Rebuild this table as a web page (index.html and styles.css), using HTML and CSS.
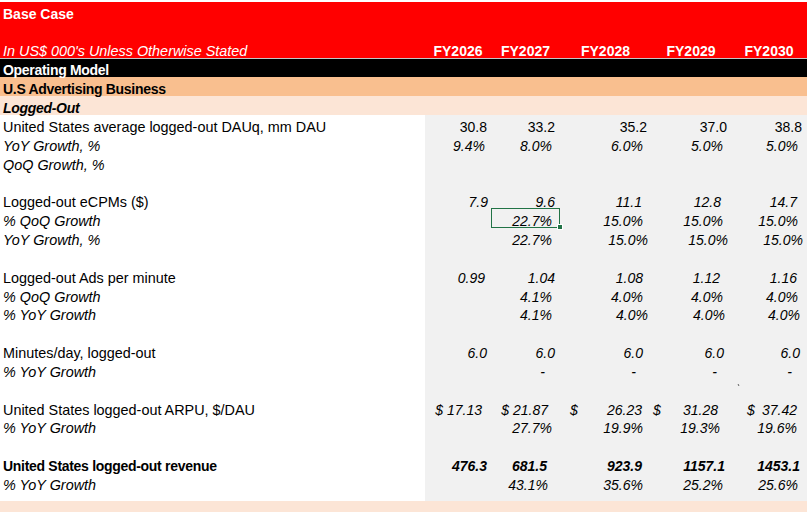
FILE: index.html
```html
<!DOCTYPE html>
<html lang="en">
<head>
<meta charset="utf-8">
<title>Base Case – Operating Model</title>
<link rel="stylesheet" href="styles.css">
</head>
<body>
<div class="sheet">
  <div class="row red first"><div class="cell lbl b span">Base Case</div></div>
  <div class="row red second"></div>
  <div class="row red hdr">
    <div class="cell lbl i">In US$ 000's Unless Otherwise Stated</div>
    <div class="cell hc">FY2026</div>
    <div class="cell hc">FY2027</div>
    <div class="cell hc">FY2028</div>
    <div class="cell hc">FY2029</div>
    <div class="cell hc">FY2030</div>
  </div>
  <div class="row black"><div class="cell lbl b span">Operating Model</div></div>
  <div class="row peach"><div class="cell lbl b span">U.S Advertising Business</div></div>
  <div class="row lpeach"><div class="cell lbl b i span">Logged-Out</div></div>

  <div class="row">
    <div class="cell lbl">United States average logged-out DAUq, mm DAU</div>
    <div class="cell num pr4">30.8</div><div class="cell num pr5">33.2</div><div class="cell num pr4">35.2</div><div class="cell num pr4">37.0</div><div class="cell num pr5">38.8</div>
  </div>
  <div class="row i">
    <div class="cell lbl">YoY Growth, %</div>
    <div class="cell num pr6">9.4%</div><div class="cell num pr8">8.0%</div><div class="cell num pr8">6.0%</div><div class="cell num pr8">5.0%</div><div class="cell num pr9">5.0%</div>
  </div>
  <div class="row i">
    <div class="cell lbl">QoQ Growth, %</div>
    <div class="cell num"></div><div class="cell num"></div><div class="cell num"></div><div class="cell num"></div><div class="cell num"></div>
  </div>
  <div class="row">
    <div class="cell lbl"></div>
    <div class="cell num"></div><div class="cell num"></div><div class="cell num"></div><div class="cell num"></div><div class="cell num"></div>
  </div>

  <div class="row">
    <div class="cell lbl">Logged-out eCPMs ($)</div>
    <div class="cell num i pr3">7.9</div><div class="cell num i pr5">9.6</div><div class="cell num i pr9">11.1</div><div class="cell num i pr10">12.8</div><div class="cell num i pr10">14.7</div>
  </div>
  <div class="row i">
    <div class="cell lbl">% QoQ Growth</div>
    <div class="cell num"></div><div class="cell num pr8 selected">22.7%<span class="sel"></span><span class="handle"></span></div><div class="cell num pr8">15.0%</div><div class="cell num pr8">15.0%</div><div class="cell num pr9">15.0%</div>
  </div>
  <div class="row i">
    <div class="cell lbl">YoY Growth, %</div>
    <div class="cell num"></div><div class="cell num pr8">22.7%</div><div class="cell num pr3">15.0%</div><div class="cell num pr3">15.0%</div><div class="cell num pr4">15.0%</div>
  </div>
  <div class="row">
    <div class="cell lbl"></div>
    <div class="cell num"></div><div class="cell num"></div><div class="cell num"></div><div class="cell num"></div><div class="cell num"></div>
  </div>

  <div class="row">
    <div class="cell lbl">Logged-out Ads per minute</div>
    <div class="cell num i pr6">0.99</div><div class="cell num i pr5">1.04</div><div class="cell num i pr8">1.08</div><div class="cell num i pr11">1.12</div><div class="cell num i pr10">1.16</div>
  </div>
  <div class="row i">
    <div class="cell lbl">% QoQ Growth</div>
    <div class="cell num"></div><div class="cell num pr8">4.1%</div><div class="cell num pr8">4.0%</div><div class="cell num pr8">4.0%</div><div class="cell num pr9">4.0%</div>
  </div>
  <div class="row i">
    <div class="cell lbl">% YoY Growth</div>
    <div class="cell num"></div><div class="cell num pr8">4.1%</div><div class="cell num pr3">4.0%</div><div class="cell num pr6">4.0%</div><div class="cell num pr7">4.0%</div>
  </div>
  <div class="row">
    <div class="cell lbl"></div>
    <div class="cell num"></div><div class="cell num"></div><div class="cell num"></div><div class="cell num"></div><div class="cell num"></div>
  </div>

  <div class="row">
    <div class="cell lbl">Minutes/day, logged-out</div>
    <div class="cell num i pr4">6.0</div><div class="cell num i pr5">6.0</div><div class="cell num i pr8">6.0</div><div class="cell num i pr7">6.0</div><div class="cell num i pr7">6.0</div>
  </div>
  <div class="row i">
    <div class="cell lbl">% YoY Growth</div>
    <div class="cell num"></div><div class="cell num pr15">-</div><div class="cell num pr15">-</div><div class="cell num pr14">-</div><div class="cell num pr15">-</div>
  </div>
  <div class="row">
    <div class="cell lbl"></div>
    <div class="cell num"></div><div class="cell num"></div><div class="cell num"></div><div class="cell num"></div><div class="cell num mark"><span class="tick"></span></div>
  </div>

  <div class="row i">
    <div class="cell lbl up">United States logged-out ARPU, $/DAU</div>
    <div class="cell num pr9">$ 17.13</div>
    <div class="cell num pr12">$ 21.87</div>
    <div class="cell num acct pl10 pr9"><span>$</span><span>26.23</span></div>
    <div class="cell num acct pl2 pr13"><span>$</span><span>31.28</span></div>
    <div class="cell num acct pl16 pr10"><span>$</span><span>37.42</span></div>
  </div>
  <div class="row i">
    <div class="cell lbl">% YoY Growth</div>
    <div class="cell num"></div><div class="cell num pr8">27.7%</div><div class="cell num pr8">19.9%</div><div class="cell num pr11">19.3%</div><div class="cell num pr10">19.6%</div>
  </div>
  <div class="row">
    <div class="cell lbl"></div>
    <div class="cell num"></div><div class="cell num"></div><div class="cell num"></div><div class="cell num"></div><div class="cell num"></div>
  </div>

  <div class="row">
    <div class="cell lbl b">United States logged-out revenue</div>
    <div class="cell num b i pr4">476.3</div><div class="cell num b i pr13">681.5</div><div class="cell num b i pr9">923.9</div><div class="cell num b i pr6">1157.1</div><div class="cell num b i pr7">1453.1</div>
  </div>
  <div class="row i">
    <div class="cell lbl">% YoY Growth</div>
    <div class="cell num"></div><div class="cell num pr12">43.1%</div><div class="cell num pr8">35.6%</div><div class="cell num pr8">25.2%</div><div class="cell num pr9">25.6%</div>
  </div>
  <div class="row short">
    <div class="cell lbl"></div>
    <div class="cell num"></div><div class="cell num"></div><div class="cell num"></div><div class="cell num"></div><div class="cell num"></div>
  </div>
  <div class="row lpeach tail"></div>
</div>
</body>
</html>
```

FILE: styles.css
```css
html, body {
  margin: 0;
  padding: 0;
  background: #ffffff;
  overflow: hidden;
}

.sheet {
  width: 807px;
  padding-top: 2px;
  font-family: "Liberation Sans", Arial, sans-serif;
  font-size: 14.4px;
  color: #000000;
}

.row {
  display: grid;
  grid-template-columns: 425px 66px 69px 91px 80px 76px;
  height: 18.85px;
  box-sizing: border-box;
}

.cell {
  display: flex;
  align-items: flex-end;
  padding-bottom: 0;
  line-height: 14px;
  white-space: nowrap;
  box-sizing: border-box;
  min-width: 0;
}

.span {
  grid-column: 1 / -1;
}

.lbl {
  padding-left: 3px;
}

.b { font-weight: bold; }
.i { font-style: italic; }
.up { font-style: normal; }

.lbl.b {
  font-size: 14px;
  letter-spacing: -0.3px;
}

/* bands */
.red {
  background: #ff0000;
  color: #ffffff;
}
.red.first {
  height: 21px;
}
.red.first .cell {
  padding-bottom: 2px;
  font-size: 14px;
  letter-spacing: 0;
}
.red.second {
  height: 16.7px;
}
.red.hdr {
  border-bottom: 1px solid #c4c4c4;
}
.hc {
  justify-content: center;
  font-weight: bold;
  font-style: normal;
  font-size: 14px;
}

.black {
  background: #000000;
  color: #ffffff;
}
.peach {
  background: #f9bf8f;
}
.lpeach {
  background: #fce5d6;
}

.short { height: 9.5px; }
.tail { height: 11px; }

/* values */
.num {
  justify-content: flex-end;
  background: #f1f1f1;
  font-size: 14px;
}
.acct {
  justify-content: space-between;
}

.pr3 { padding-right: 3px; }
.pr4 { padding-right: 4px; }
.pr5 { padding-right: 5px; }
.pr6 { padding-right: 6px; }
.pr7 { padding-right: 7px; }
.pr8 { padding-right: 8px; }
.pr9 { padding-right: 9px; }
.pr10 { padding-right: 10px; }
.pr11 { padding-right: 11px; }
.pr12 { padding-right: 12px; }
.pr13 { padding-right: 13px; }
.pr14 { padding-right: 14px; }
.pr15 { padding-right: 15px; }
.pl2 { padding-left: 2px; }
.pl10 { padding-left: 10px; }
.pl16 { padding-left: 16px; }

/* selected cell */
.selected {
  position: relative;
}
.sel {
  position: absolute;
  left: 0;
  right: 0;
  top: -1px;
  bottom: 0;
  border: 1px solid #217346;
}
.handle {
  position: absolute;
  right: -3px;
  bottom: -2px;
  width: 4px;
  height: 4px;
  background: #217346;
  border: 1px solid #ffffff;
}

/* stray mark */
.mark {
  position: relative;
}
.tick {
  position: absolute;
  left: 7px;
  top: 5px;
  width: 1px;
  height: 2px;
  background: #555555;
  transform: rotate(-30deg);
}
```
